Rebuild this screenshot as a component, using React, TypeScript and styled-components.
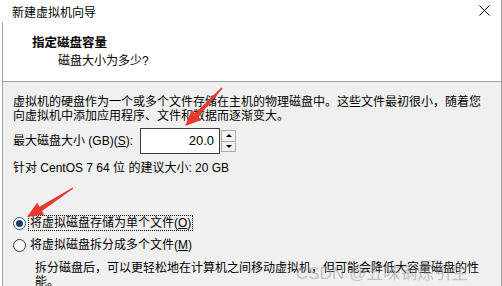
import * as React from 'react';
import styled, { createGlobalStyle } from 'styled-components';

const GlobalStyle = createGlobalStyle`
  html, body {
    margin: 0;
    padding: 0;
    background: #ffffff;
  }
  body {
    font-family: "Liberation Sans", "Noto Sans CJK SC", sans-serif;
    font-size: 12px;
    color: #000;
  }
`

const Window = styled.div`
  position: relative;
  width: 501px;
  height: 286px;
  overflow: hidden;
  background: #ffffff;
  border-right: 1px solid #a0a0a0;
`

const TitleBar = styled.div`
  height: 22px;
  box-sizing: border-box;
  padding: 6px 11px 0 12px;
  display: flex;
  justify-content: space-between;
  line-height: 14px;
  white-space: nowrap;

  svg {
    margin-top: -1px;
  }
`

const Frame = styled.div`
  margin-left: 2px;
  height: 264px;
  border-left: 1px solid #a0a0a0;
  display: flex;
  flex-direction: column;
`

const Header = styled.div`
  height: 60px;
  flex: none;
  box-sizing: border-box;
  padding: 14px 0 0 29px;
  background: #ffffff;
  border-bottom: 1px solid #a0a0a0;
  line-height: 14px;

  .title {
    font-weight: bold;
    font-size: 12.5px;
  }

  .sub {
    margin: 4px 0 0 26px;
  }
`

const Body = styled.div`
  flex: 1;
  background: #f0f0f0;
  padding: 13px 0 0 10px;
  line-height: 14px;
  white-space: nowrap;
`

const SizeRow = styled.div`
  display: flex;
  align-items: center;
  height: 26px;
  margin-top: 5px;

  > label {
    width: 127px;
  }

  u {
    text-decoration: underline;
  }
`

const NumberBox = styled.div`
  width: 80px;
  height: 26px;
  box-sizing: border-box;
  border: 1px solid #3c3c3c;
  background: #ffffff;
  display: flex;
  align-items: center;
  justify-content: flex-end;
  padding-right: 5px;
  font-size: 13px;
`

const Spinner = styled.div`
  margin-left: 1px;
  width: 15px;
  height: 22px;
  box-sizing: border-box;
  border: 1px solid #adadad;
  display: flex;
  flex-direction: column;
`

const SpinButton = styled.div<{ $down?: boolean }>`
  flex: 1;
  display: flex;
  align-items: center;
  justify-content: center;
  background: #f0f0f0;
  border-top: ${p => (p.$down ? '1px solid #adadad' : 'none')};

  &::after {
    content: '';
    border-left: 3px solid transparent;
    border-right: 3px solid transparent;
    border-bottom: ${p => (p.$down ? 'none' : '3px solid #000')};
    border-top: ${p => (p.$down ? '3px solid #000' : 'none')};
  }
`

const Hint = styled.div`
  margin-top: 7px;
`

const RadioRow = styled.label<{ $first?: boolean }>`
  display: flex;
  align-items: center;
  height: 16px;
  margin-top: ${p => (p.$first ? '40px' : '6px')};
  gap: 3px;
`

const RadioDot = styled.span<{ $checked?: boolean }>`
  width: 13px;
  height: 13px;
  box-sizing: border-box;
  border-radius: 50%;
  border: 1px solid ${p => (p.$checked ? '#1f5c9a' : '#333')};
  background: #fff;
  display: flex;
  align-items: center;
  justify-content: center;

  &::after {
    content: '';
    width: 7px;
    height: 7px;
    border-radius: 50%;
    background: ${p => (p.$checked ? '#1e3e63' : 'transparent')};
  }
`

const RadioText = styled.span<{ $focus?: boolean }>`
  padding: 0 1px;
  line-height: 14px;
  outline: ${p => (p.$focus ? '1px dotted #000' : 'none')};
`

const Note = styled.div`
  margin: 8px 0 0 22px;
`

const Overlay = styled.svg`
  position: absolute;
  left: 0;
  top: 0;
  pointer-events: none;
`

const Watermark = styled.div`
  position: absolute;
  left: 296px;
  top: 259px;
  font-size: 17px;
  color: rgba(150, 150, 150, 0.55);
  white-space: nowrap;
  pointer-events: none;
`

const App: React.FunctionComponent = () => {
  return (
    <Window>
      <GlobalStyle />
      <TitleBar>
        <span>新建虚拟机向导</span>
        <svg width="11" height="11" viewBox="0 0 11 11">
          <path d="M0.5 0.5 L10.5 10.5 M10.5 0.5 L0.5 10.5" stroke="#000" strokeWidth="1" fill="none" />
        </svg>
      </TitleBar>
      <Frame>
        <Header>
          <div className="title">指定磁盘容量</div>
          <div className="sub">磁盘大小为多少?</div>
        </Header>
        <Body>
          <div>
            虚拟机的硬盘作为一个或多个文件存储在主机的物理磁盘中。这些文件最初很小，随着您
            <br />
            向虚拟机中添加应用程序、文件和数据而逐渐变大。
          </div>
          <SizeRow>
            <label>最大磁盘大小 (GB)(<u>S</u>):</label>
            <NumberBox>20.0</NumberBox>
            <Spinner>
              <SpinButton />
              <SpinButton $down />
            </Spinner>
          </SizeRow>
          <Hint>针对 CentOS 7 64 位 的建议大小: 20 GB</Hint>
          <RadioRow $first>
            <RadioDot $checked />
            <RadioText $focus>将虚拟磁盘存储为单个文件(<u>O</u>)</RadioText>
          </RadioRow>
          <RadioRow>
            <RadioDot />
            <RadioText>将虚拟磁盘拆分成多个文件(<u>M</u>)</RadioText>
          </RadioRow>
          <Note>
            拆分磁盘后，可以更轻松地在计算机之间移动虚拟机，但可能会降低大容量磁盘的性
            <br />
            能。
          </Note>
        </Body>
      </Frame>

      <Watermark>CSDN @五味钢炼引生</Watermark>

      {/* red annotation arrows */}
      <Overlay width="502" height="286" viewBox="0 0 502 286">
        <polygon
          fill="#e8392e"
          points="222.6,88.4 198.3,116.8 201.4,120.1 185,126 191.8,109.9 194.9,113.2 221.4,87.6"
        />
        <polygon
          fill="#e8392e"
          points="73.3,188.4 42.0,211.0 44.3,214.8 27,217 37.1,202.8 39.4,206.7 72.7,187.6"
        />
      </Overlay>
    </Window>
  );
};

export default App;
